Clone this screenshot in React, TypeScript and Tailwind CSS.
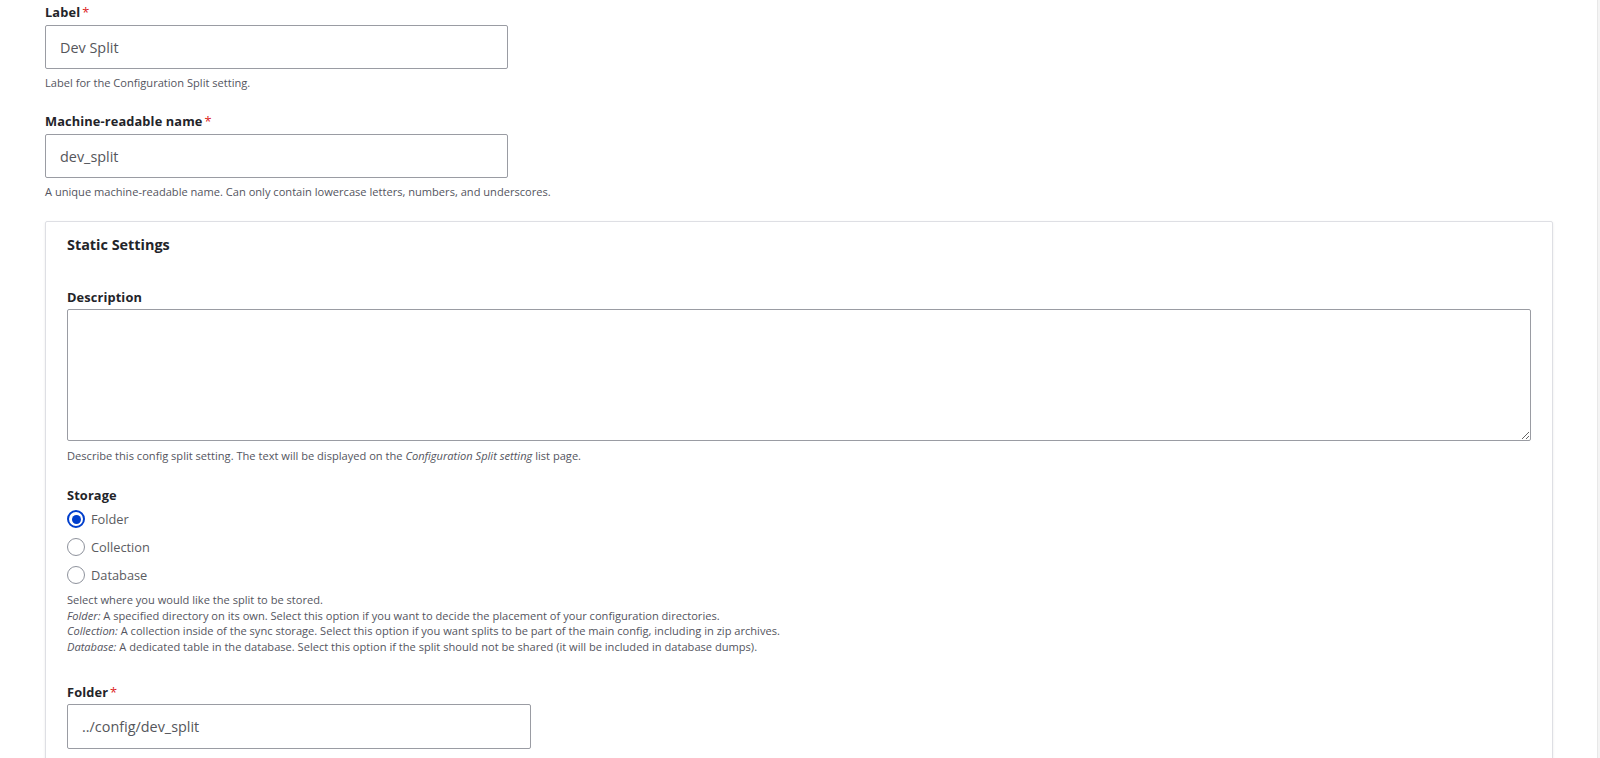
import React, { useState } from 'react';

const font = { fontFamily: '"Open Sans", "Noto Sans", Arial, sans-serif' };

function Required() {
  return <span className="ml-[2px] text-[#dc2323] font-normal">*</span>;
}

function Radio({ label, checked, onClick }: { label: string; checked: boolean; onClick: () => void }) {
  return (
    <label className="flex h-[28px] items-center gap-[6px] cursor-pointer" onClick={onClick}>
      {checked ? (
        <span className="flex h-[18px] w-[18px] items-center justify-center rounded-full border-2 border-[#003ecc] bg-white">
          <span className="h-[9px] w-[9px] rounded-full bg-[#003ecc]" />
        </span>
      ) : (
        <span className="h-[18px] w-[18px] rounded-full border border-[#8e929c] bg-white" />
      )}
      <span className="text-[12.8px] leading-[16px] text-[#5b5c61]">{label}</span>
    </label>
  );
}

export default function App() {
  const [storage, setStorage] = useState('folder');

  return (
    <div className="flex min-h-[758px] bg-white" style={font}>
      <div className="flex-1 pl-[45px] pr-[44px] pt-[4px]">
        {/* Label */}
        <div className="text-[12.8px] leading-[16px] font-bold tracking-[0.01em] text-[#232429]">
          Label<Required />
        </div>
        <input
          defaultValue="Dev Split"
          className="mt-[5px] block h-[44px] w-[463px] rounded-[2px] border border-[#9a9ca3] px-[14px] text-[14.4px] text-[#55565b] outline-none"
        />
        <div className="mt-[6px] text-[11.1px] leading-[15px] text-[#545560]">Label for the Configuration Split setting.</div>

        {/* Machine name */}
        <div className="mt-[23px] text-[12.8px] leading-[16px] font-bold tracking-[0.01em] text-[#232429]">
          Machine-readable name<Required />
        </div>
        <input
          defaultValue="dev_split"
          className="mt-[5px] block h-[44px] w-[463px] rounded-[2px] border border-[#9a9ca3] px-[14px] text-[14.4px] text-[#55565b] outline-none"
        />
        <div className="mt-[6px] text-[11.1px] leading-[15px] text-[#545560]">
          A unique machine-readable name. Can only contain lowercase letters, numbers, and underscores.
        </div>

        {/* Static settings fieldset */}
        <div className="mt-[22px] rounded-[2px] border border-[#dedfe4] shadow-[0_1px_3px_rgba(0,0,0,0.08)] px-[21px] pt-[14px] pb-[20px]">
          <div className="text-[14.4px] leading-[18px] font-bold text-[#232429]">Static Settings</div>

          <div className="mt-[35px] text-[12.8px] leading-[16px] font-bold tracking-[0.01em] text-[#232429]">Description</div>
          <textarea className="mt-[4px] block h-[132px] w-full rounded-[2px] border border-[#9a9ca3] px-[14px] py-[10px] text-[14.4px] outline-none" />
          <div className="mt-[7px] text-[11.1px] leading-[15px] text-[#545560]">
            Describe this config split setting. The text will be displayed on the <em>Configuration Split setting</em> list page.
          </div>

          <div className="mt-[24px] text-[12.8px] leading-[16px] font-bold tracking-[0.01em] text-[#232429]">Storage</div>
          <div className="mt-[2px] flex flex-col">
            <Radio label="Folder" checked={storage === 'folder'} onClick={() => setStorage('folder')} />
            <Radio label="Collection" checked={storage === 'collection'} onClick={() => setStorage('collection')} />
            <Radio label="Database" checked={storage === 'database'} onClick={() => setStorage('database')} />
          </div>
          <div className="mt-[3px] text-[11.1px] leading-[15.7px] text-[#545560]">
            <div>Select where you would like the split to be stored.</div>
            <div><em>Folder:</em> A specified directory on its own. Select this option if you want to decide the placement of your configuration directories.</div>
            <div><em>Collection:</em> A collection inside of the sync storage. Select this option if you want splits to be part of the main config, including in zip archives.</div>
            <div><em>Database:</em> A dedicated table in the database. Select this option if the split should not be shared (it will be included in database dumps).</div>
          </div>

          <div className="mt-[29px] text-[12.8px] leading-[16px] font-bold tracking-[0.01em] text-[#232429]">
            Folder<Required />
          </div>
          <input
            defaultValue="../config/dev_split"
            className="mt-[4px] block h-[45px] w-[464px] rounded-[2px] border border-[#9a9ca3] px-[14px] text-[14.4px] text-[#55565b] outline-none"
          />
          <div className="mt-[6px] text-[11.1px] leading-[15px] text-[#545560]">
            The directory, relative to the Drupal root, in which to save the filtered config. This is typically a sibling directory of what you defined in $settings["config_sync_directory"] in settings.php, for more information consult the README.
          </div>
        </div>
      </div>
      <div className="w-[3px] border-l border-[#e8e8e8] bg-[#f4f4f4]" />
    </div>
  );
}
